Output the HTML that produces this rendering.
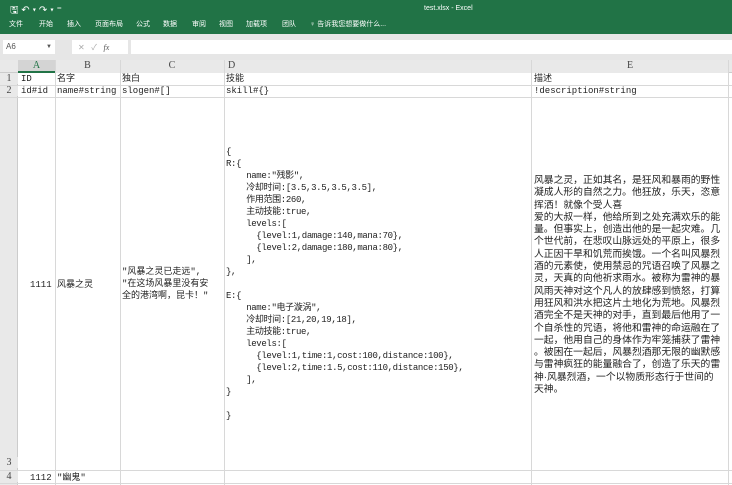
<!DOCTYPE html><html><head><meta charset="utf-8"><style>
*{margin:0;padding:0;box-sizing:border-box}
body{width:732px;height:485px;overflow:hidden;background:#fff;position:relative;font-family:"Liberation Sans","Noto Sans CJK SC",sans-serif}
.a{position:absolute;white-space:nowrap}
.g{background:#217346}
.t{color:#fff;font-size:7px}
.m{font-family:"Liberation Mono","Noto Sans CJK SC",monospace;font-size:9px;color:#222;line-height:12px}
.hd{background:#e9e9e9;color:#444;font-size:10px;text-align:center;font-family:"Liberation Serif","Noto Serif CJK SC",serif}
.vl{position:absolute;width:1px;background:#d8d8d8}
.hl{position:absolute;height:1px;background:#d8d8d8}
.d{font-family:"Liberation Sans","Noto Sans CJK SC",sans-serif;font-size:9.8px;line-height:12.3px;color:#222}
</style></head><body>
<div class="a g" style="left:0;top:0;width:732px;height:34px"></div>
<div class="a t" style="left:10px;top:3px;font-size:10px">🖫 ↶ ▾ ↷ ▾ ⁼</div>
<div class="a t" style="left:424px;top:5px">test.xlsx - Excel</div>
<div class="a t" style="left:9px;top:19px">文件</div>
<div class="a t" style="left:39px;top:19px">开始</div>
<div class="a t" style="left:67px;top:19px">插入</div>
<div class="a t" style="left:95px;top:19px">页面布局</div>
<div class="a t" style="left:136px;top:19px">公式</div>
<div class="a t" style="left:163px;top:19px">数据</div>
<div class="a t" style="left:192px;top:19px">审阅</div>
<div class="a t" style="left:219px;top:19px">视图</div>
<div class="a t" style="left:246px;top:19px">加载项</div>
<div class="a t" style="left:282px;top:19px">团队</div>
<div class="a t" style="left:310px;top:19px">♀ 告诉我您想要做什么...</div>
<div class="a" style="left:0;top:34px;width:732px;height:26px;background:#e6e6e6"></div>
<div class="a" style="left:3px;top:40px;width:52px;height:14px;background:#fff;font-size:8px;color:#555;padding:2px 3px">A6<span style="position:absolute;right:3px;font-size:6px;top:4px">▼</span></div>
<div class="a" style="left:72px;top:40px;width:56px;height:14px;background:#fff;font-size:8px;color:#aaa;padding:2px 6px">✕ &nbsp; ✓ &nbsp; <i style="color:#555;font-family:'Liberation Serif'">fx</i></div>
<div class="a" style="left:131px;top:40px;width:601px;height:14px;background:#fff"></div>
<div class="a hd" style="left:0;top:60px;width:732px;height:13px;border-bottom:1px solid #ccc"></div>
<div class="a hd" style="left:18px;top:60px;width:37px;height:13px;background:#d4d4d4;border-bottom:2px solid #217346;color:#217346">A</div>
<div class="a hd" style="left:55px;top:60px;width:65px;height:13px">B</div>
<div class="a hd" style="left:120px;top:60px;width:104px;height:13px">C</div>
<div class="a hd" style="left:224px;top:60px;width:307px;height:13px;text-align:left;padding-left:4px">D</div>
<div class="a hd" style="left:532px;top:60px;width:196px;height:13px">E</div>
<div class="a hd" style="left:0;top:73px;width:18px;height:412px;border-right:1px solid #ccc"></div>
<div class="a hd" style="left:0;top:73px;width:18px;font-size:10px">1</div>
<div class="a hd" style="left:0;top:85px;width:18px">2</div>
<div class="a hd" style="left:0;top:457px;width:18px">3</div>
<div class="a hd" style="left:0;top:471px;width:18px">4</div>
<div class="vl" style="left:55px;top:60px;height:425px"></div>
<div class="vl" style="left:120px;top:60px;height:425px"></div>
<div class="vl" style="left:224px;top:60px;height:425px"></div>
<div class="vl" style="left:531px;top:60px;height:425px"></div>
<div class="vl" style="left:728px;top:60px;height:425px"></div>
<div class="hl" style="left:0;top:85px;width:732px"></div>
<div class="hl" style="left:0;top:97px;width:732px"></div>
<div class="hl" style="left:0;top:470px;width:732px"></div>
<div class="hl" style="left:0;top:483px;width:732px"></div>
<div class="a m" style="left:21px;top:73px">ID</div>
<div class="a m" style="left:57px;top:73px">名字</div>
<div class="a m" style="left:122px;top:73px">独白</div>
<div class="a m" style="left:226px;top:73px">技能</div>
<div class="a m" style="left:534px;top:73px">描述</div>
<div class="a m" style="left:21px;top:85px">id#id</div>
<div class="a m" style="left:57px;top:85px">name#string</div>
<div class="a m" style="left:122px;top:85px">slogen#[]</div>
<div class="a m" style="left:226px;top:85px">skill#{}</div>
<div class="a m" style="left:534px;top:85px">!description#string</div>
<div class="a m" style="left:30px;top:279px">1111</div>
<div class="a m" style="left:57px;top:279px">风暴之灵</div>
<div class="a m" style="left:122px;top:266px">"风暴之灵已走远",<br>"在这场风暴里没有安<br>全的港湾啊，昆卡！"</div>
<div class="a m" style="left:30px;top:472px">1112</div>
<div class="a m" style="left:57px;top:472px">"幽鬼"</div>
<div class="a m" style="left:226px;top:146px;white-space:pre;letter-spacing:-0.35px">{
R:{
    name:"残影",
    冷却时间:[3.5,3.5,3.5,3.5],
    作用范围:260,
    主动技能:true,
    levels:[
      {level:1,damage:140,mana:70},
      {level:2,damage:180,mana:80},
    ],
},

E:{
    name:"电子漩涡",
    冷却时间:[21,20,19,18],
    主动技能:true,
    levels:[
      {level:1,time:1,cost:100,distance:100},
      {level:2,time:1.5,cost:110,distance:150},
    ],
}

}</div>
<div class="a d" style="left:534px;top:175px">风暴之灵，正如其名，是狂风和暴雨的野性<br>凝成人形的自然之力。他狂放，乐天，恣意<br>挥洒！就像个受人喜<br>爱的大叔一样，他给所到之处充满欢乐的能<br>量。但事实上，创造出他的是一起灾难。几<br>个世代前，在悲叹山脉远处的平原上，很多<br>人正因干旱和饥荒而挨饿。一个名叫风暴烈<br>酒的元素使，使用禁忌的咒语召唤了风暴之<br>灵，天真的向他祈求雨水。被称为雷神的暴<br>风雨天神对这个凡人的放肆感到愤怒，打算<br>用狂风和洪水把这片土地化为荒地。风暴烈<br>酒完全不是天神的对手，直到最后他用了一<br>个自杀性的咒语，将他和雷神的命运融在了<br>一起，他用自己的身体作为牢笼捕获了雷神<br>。被困在一起后，风暴烈酒那无限的幽默感<br>与雷神疯狂的能量融合了，创造了乐天的雷<br>神·风暴烈酒，一个以物质形态行于世间的<br>天神。</div>
</body></html>
